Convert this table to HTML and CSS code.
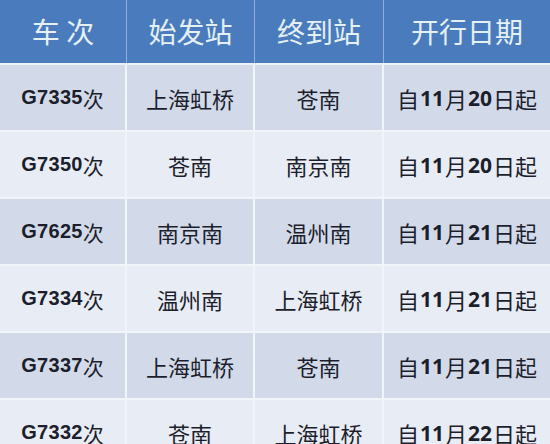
FILE: index.html
```html
<!DOCTYPE html>
<html lang="zh-CN">
<head>
<meta charset="utf-8">
<title>列车时刻</title>
<link rel="stylesheet" href="styles.css">
</head>
<body>
<div class="table">
  <div class="row head">
    <div class="cell">车&nbsp;次</div>
    <div class="cell">始发站</div>
    <div class="cell">终到站</div>
    <div class="cell">开行日期</div>
  </div>
  <div class="row dark">
    <div class="cell train"><b>G7335</b>次</div>
    <div class="cell">上海虹桥</div>
    <div class="cell">苍南</div>
    <div class="cell date">自<b>11</b>月<b>20</b>日起</div>
  </div>
  <div class="row light">
    <div class="cell train"><b>G7350</b>次</div>
    <div class="cell">苍南</div>
    <div class="cell">南京南</div>
    <div class="cell date">自<b>11</b>月<b>20</b>日起</div>
  </div>
  <div class="row dark">
    <div class="cell train"><b>G7625</b>次</div>
    <div class="cell">南京南</div>
    <div class="cell">温州南</div>
    <div class="cell date">自<b>11</b>月<b>21</b>日起</div>
  </div>
  <div class="row light">
    <div class="cell train"><b>G7334</b>次</div>
    <div class="cell">温州南</div>
    <div class="cell">上海虹桥</div>
    <div class="cell date">自<b>11</b>月<b>21</b>日起</div>
  </div>
  <div class="row dark">
    <div class="cell train"><b>G7337</b>次</div>
    <div class="cell">上海虹桥</div>
    <div class="cell">苍南</div>
    <div class="cell date">自<b>11</b>月<b>21</b>日起</div>
  </div>
  <div class="row light">
    <div class="cell train"><b>G7332</b>次</div>
    <div class="cell">苍南</div>
    <div class="cell">上海虹桥</div>
    <div class="cell date">自<b>11</b>月<b>22</b>日起</div>
  </div>
</div>
</body>
</html>
```

FILE: styles.css
```css
html, body {
  margin: 0;
  padding: 0;
  background: #e9edf4;
}
body {
  width: 550px;
  height: 444px;
  overflow: hidden;
  font-family: "Noto Sans CJK SC", "Liberation Sans", sans-serif;
  color: #1d1e2c;
}
.table {
  display: flex;
  flex-direction: column;
}
.row {
  display: grid;
  grid-template-columns: 127px 128px 129px 166px;
  height: 67px;
  box-sizing: border-box;
  border-bottom: 2px solid #f1f4f9;
}
.cell {
  display: flex;
  align-items: center;
  justify-content: center;
  font-size: 22px;
  border-right: 2px solid #f1f4f9;
  white-space: nowrap;
}
.cell:last-child {
  border-right: none;
}
.head {
  height: 65px;
  background: #4a7bbd;
  border-bottom: 2px solid #eef2f8;
}
.head .cell {
  font-size: 28px;
  color: #e4f0f2;
  border-right: 1px solid #8fb0d8;
  padding-bottom: 2px;
}
.head .cell:last-child {
  border-right: none;
}
.dark {
  background: #d2daea;
}
.light {
  background: #e8ecf4;
}
.train b {
  font-family: "Liberation Sans", sans-serif;
  font-weight: bold;
  font-size: 20px;
  letter-spacing: 0.3px;
}
.train {
  font-size: 21px;
}
.date b {
  font-family: "Open Sans", "Liberation Sans", sans-serif;
  font-weight: bold;
  font-size: 21px;
  margin: 0 1px;
}
```
